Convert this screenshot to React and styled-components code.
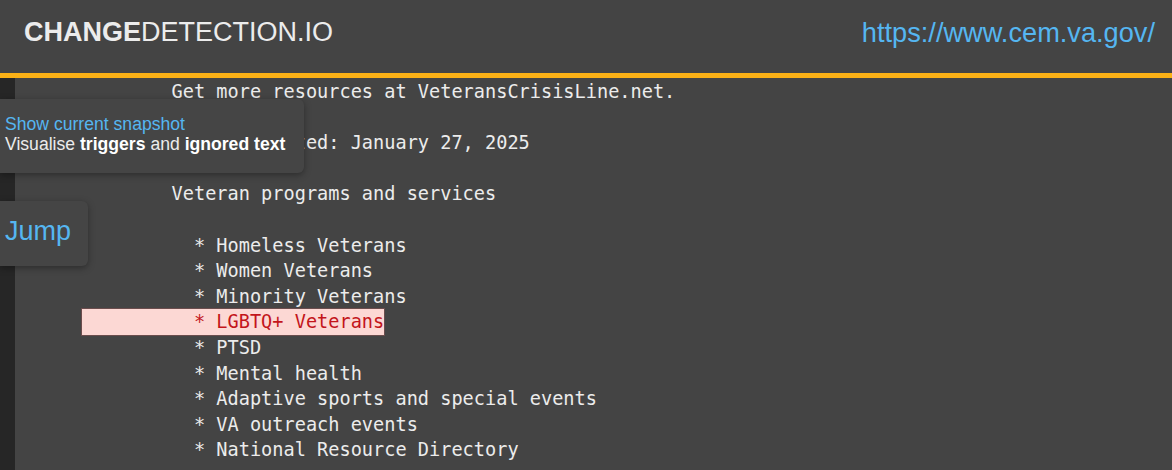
import React from 'react';
import styled, { createGlobalStyle } from 'styled-components';

const GlobalStyle = createGlobalStyle`
    html, body {
        margin: 0;
        padding: 0;
        background: #444444;
        overflow: hidden;
    }
`;

const Page = styled.div`
    position: relative;
    min-height: 100vh;
    background: #444444;
    font-family: "Liberation Sans", Arial, sans-serif;
`;

const Header = styled.header`
    height: 65px;
    display: flex;
    align-items: center;
    justify-content: space-between;
    padding: 0 17px 8px 24px;
    border-bottom: 5px solid #fbb116;
    background: #444444;
`;

const Logo = styled.div`
    font-size: 27px;
    color: #ececec;

    b {
        font-weight: 700;
    }
`;

const SiteUrl = styled.a`
    font-size: 27.2px;
    color: #55b6f1;
    text-decoration: none;
`;

const Body = styled.div`
    display: grid;
    grid-template-columns: 15px 1fr;
    min-height: calc(100vh - 78px);
`;

const Strip = styled.div`
    background: #262626;
`;

const Snapshot = styled.pre`
    margin: 0;
    padding: 1px 0 0 67px;
    font-family: "DejaVu Sans Mono", monospace;
    font-size: 18.6px;
    line-height: 25.6px;
    color: #ececec;
    white-space: pre;
`;

const Changed = styled.span`
    display: inline-block;
    background: #fcd8d4;
    color: #c3151b;
    box-shadow: 0 0 0 1px rgba(120, 80, 80, 0.75);
`;

const Popover = styled.div`
    position: absolute;
    left: 0;
    top: ${p => p.$top}px;
    background: #454545;
    border-radius: 0 6px 6px 0;
    box-shadow: 0 2px 7px rgba(0, 0, 0, 0.35);
`;

const SnapshotBox = styled(Popover)`
    width: 299px;
    padding: 15px 0 19px 5px;
    font-size: 17.6px;
    line-height: 20px;
    color: #ececec;

    b {
        font-weight: 700;
        color: #fff;
    }
`;

const SnapshotLink = styled.a`
    display: block;
    color: #55b6f1;
    text-decoration: none;
`;

const JumpBox = styled(Popover)`
    box-sizing: border-box;
    width: 88px;
    height: 65px;
    padding: 0 0 4px 5px;
    display: flex;
    align-items: center;
    font-size: 27px;
    color: #55b6f1;
`;

const pad = n => ' '.repeat(n);

const before = [
    pad(8) + 'Get more resources at VeteransCrisisLine.net.',
    '',
    pad(10) + 'Last updated: January 27, 2025',
    '',
    pad(8) + 'Veteran programs and services',
    '',
    pad(10) + '* Homeless Veterans',
    pad(10) + '* Women Veterans',
    pad(10) + '* Minority Veterans',
].join('\n');

const after = [
    pad(10) + '* PTSD',
    pad(10) + '* Mental health',
    pad(10) + '* Adaptive sports and special events',
    pad(10) + '* VA outreach events',
    pad(10) + '* National Resource Directory',
].join('\n');

export default function App() {
    return (
        <Page>
            <GlobalStyle />
            <Header>
                <Logo><b>CHANGE</b>DETECTION.IO</Logo>
                <SiteUrl href="#">https://www.cem.va.gov/</SiteUrl>
            </Header>
            <Body>
                <Strip />
                <Snapshot>
                    {before + '\n'}
                    <Changed>{pad(10) + '* LGBTQ+ Veterans'}</Changed>
                    {'\n' + after}
                </Snapshot>
            </Body>
            <SnapshotBox $top={99}>
                <SnapshotLink href="#">Show current snapshot</SnapshotLink>
                Visualise <b>triggers</b> and <b>ignored text</b>
            </SnapshotBox>
            <JumpBox $top={201}>Jump</JumpBox>
        </Page>
    );
}
